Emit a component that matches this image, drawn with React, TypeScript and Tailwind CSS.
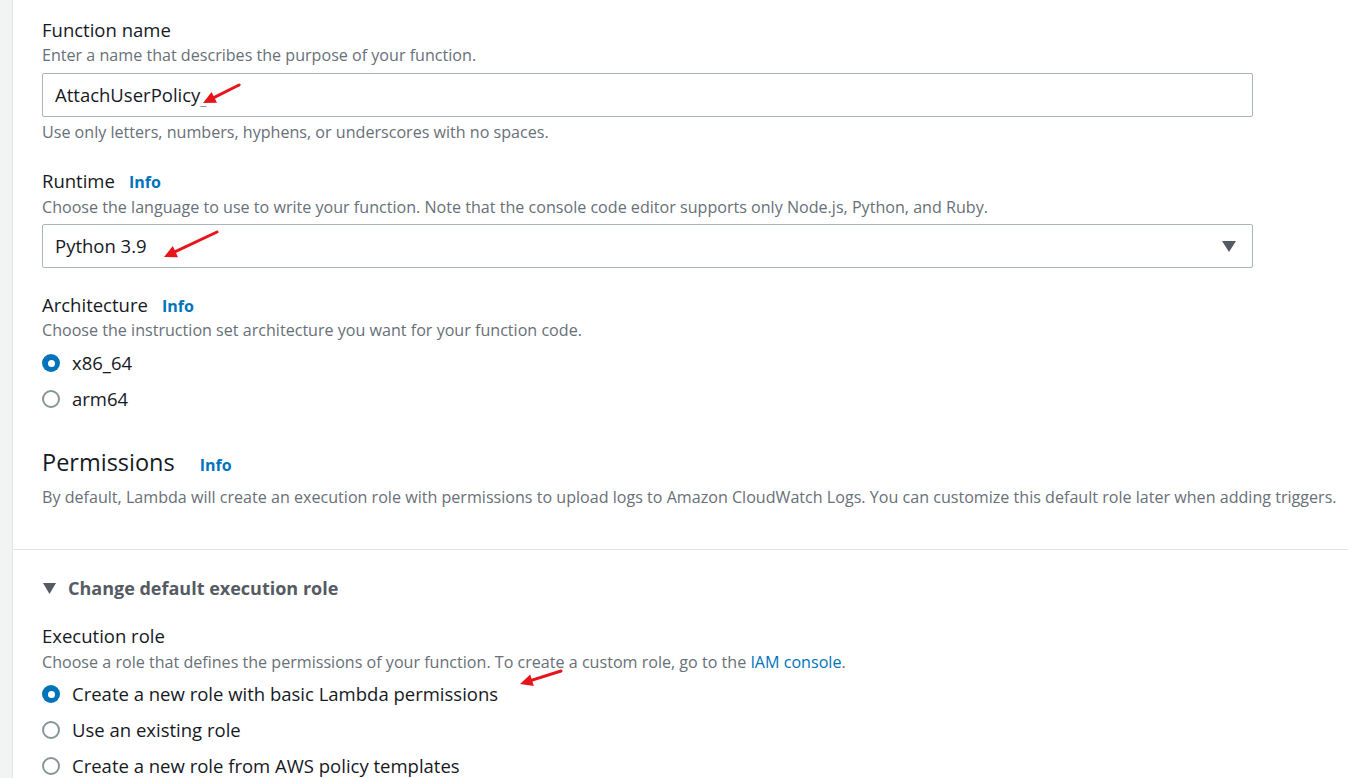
const font = { fontFamily: '"Open Sans", "Noto Sans", Arial, sans-serif' };

function Info() {
  return <span className="text-[#0073bb] font-bold text-[16px] ml-[14px]">Info</span>;
}

function Radio({ checked, label }: { checked?: boolean; label: string }) {
  return (
    <div className="flex items-center h-[36px]">
      {checked ? (
        <span className="w-[18px] h-[18px] rounded-full bg-[#0073bb] flex items-center justify-center">
          <span className="w-[7px] h-[7px] rounded-full bg-white" />
        </span>
      ) : (
        <span className="w-[18px] h-[18px] rounded-full border-2 border-[#879596] bg-white" />
      )}
      <span className="ml-[12px] text-[18.5px] text-[#16191f]">{label}</span>
    </div>
  );
}

function Arrow({ x1, y1, x2, y2 }: { x1: number; y1: number; x2: number; y2: number }) {
  const a = Math.atan2(y2 - y1, x2 - x1);
  const l = 14;
  const w = 0.45;
  const p1 = [x2 - l * Math.cos(a - w), y2 - l * Math.sin(a - w)];
  const p2 = [x2 - l * Math.cos(a + w), y2 - l * Math.sin(a + w)];
  return (
    <g>
      <line x1={x1} y1={y1} x2={x2 - 6 * Math.cos(a)} y2={y2 - 6 * Math.sin(a)} stroke="#e8141b" strokeWidth="3" strokeLinecap="round" />
      <polygon points={`${x2},${y2} ${p1[0]},${p1[1]} ${p2[0]},${p2[1]}`} fill="#e8141b" />
    </g>
  );
}

export default function App() {
  return (
    <div className="relative w-[1348px] h-[778px] overflow-hidden bg-white flex" style={font}>
      <div className="w-[13px] shrink-0 bg-[#f2f3f3] border-r border-[#e1e4e4]" />
      <div className="flex-1 flex flex-col">
        <div className="pl-[29px] pt-[17px]">
          <div className="text-[18.5px] text-[#16191f] leading-[26px]">Function name</div>
          <div className="text-[16.1px] text-[#687078] leading-[22px] mt-[1px]">Enter a name that describes the purpose of your function.</div>
          <div className="mt-[7px] w-[1211px] h-[44px] border border-[#aab7b8] rounded-[2px] flex items-center pl-[12px] text-[18.5px] text-[#16191f]">
            AttachUserPolicy<span className="text-[#879596] text-[14px] translate-y-[4px]">_</span>
          </div>
          <div className="text-[16.1px] text-[#687078] leading-[22px] mt-[4px]">Use only letters, numbers, hyphens, or underscores with no spaces.</div>

          <div className="mt-[25px] flex items-baseline text-[18.5px] text-[#16191f] leading-[26px]">Runtime<Info /></div>
          <div className="text-[16.1px] text-[#687078] leading-[22px] mt-[1px]">Choose the language to use to write your function. Note that the console code editor supports only Node.js, Python, and Ruby.</div>
          <div className="mt-[6px] w-[1211px] h-[44px] border border-[#aab7b8] rounded-[2px] flex items-center justify-between pl-[12px] pr-[16px] text-[18.5px] text-[#16191f]">
            <span>Python 3.9</span>
            <svg width="14" height="11" viewBox="0 0 14 11"><polygon points="0,0 14,0 7,11" fill="#545b64" /></svg>
          </div>

          <div className="mt-[24px] flex items-baseline text-[18.5px] text-[#16191f] leading-[26px]">Architecture<Info /></div>
          <div className="text-[16.1px] text-[#687078] leading-[22px]">Choose the instruction set architecture you want for your function code.</div>
          <div className="mt-[4px] flex flex-col">
            <Radio checked label="x86_64" />
            <Radio label="arm64" />
          </div>

          <div className="mt-[30px] flex items-baseline text-[#16191f]">
            <span className="text-[23.5px] leading-[30px]">Permissions</span>
            <span className="text-[#0073bb] font-bold text-[16px] ml-[25px]">Info</span>
          </div>
          <div className="text-[16.1px] text-[#687078] leading-[22px] mt-[9px] whitespace-nowrap">By default, Lambda will create an execution role with permissions to upload logs to Amazon CloudWatch Logs. You can customize this default role later when adding triggers.</div>
        </div>
        <div className="mt-[41px] border-t border-[#e1e4e4]" />
        <div className="pl-[29px] pt-[25px]">
          <div className="flex items-center text-[18px] font-bold text-[#545b64] leading-[26px]">
            <svg width="13" height="11" viewBox="0 0 13 11" className="ml-[1px] mr-[12px]"><polygon points="0,0 13,0 6.5,11" fill="#545b64" /></svg>
            Change default execution role
          </div>
          <div className="mt-[22px] text-[18.5px] text-[#16191f] leading-[26px]">Execution role</div>
          <div className="text-[16.1px] text-[#687078] leading-[22px] mt-[2px]">
            Choose a role that defines the permissions of your function. To create a custom role, go to the <span className="text-[#0073bb]">IAM console</span>.
          </div>
          <div className="mt-[3px] flex flex-col">
            <Radio checked label="Create a new role with basic Lambda permissions" />
            <Radio label="Use an existing role" />
            <Radio label="Create a new role from AWS policy templates" />
          </div>
        </div>
      </div>
      <svg className="absolute inset-0 pointer-events-none" width="1348" height="778">
        <Arrow x1={239} y1={85} x2={203} y2={103} />
        <Arrow x1={217} y1={232} x2={164} y2={257} />
        <Arrow x1={561} y1={671} x2={520} y2={684} />
      </svg>
    </div>
  );
}
